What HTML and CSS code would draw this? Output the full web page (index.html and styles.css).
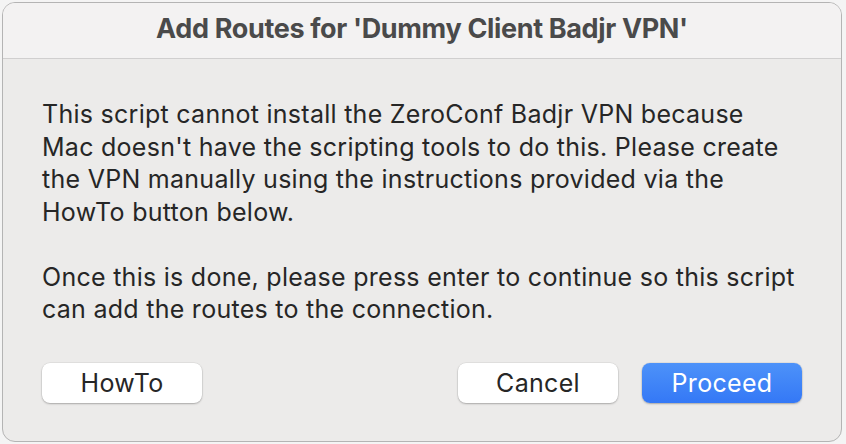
FILE: index.html
```html
<!DOCTYPE html>
<html lang="en">

<head>
  <meta charset="UTF-8">
  <meta name="viewport" content="width=device-width, initial-scale=1.0">
  <title>Add Routes</title>
  <link rel="stylesheet" href="styles.css">
</head>

<body>
  <div class="dialog">
    <div class="titlebar">Add Routes for 'Dummy Client Badjr VPN'</div>
    <div class="content">
      <p>This script cannot install the ZeroConf Badjr VPN because<br>
        Mac doesn't have the scripting tools to do this. Please create<br>
        the VPN manually using the instructions provided via the<br>
        HowTo button below.</p>
      <p>Once this is done, please press enter to continue so this script<br>
        can add the routes to the connection.</p>
      <div class="buttons">
        <button class="btn">HowTo</button>
        <div class="right">
          <button class="btn">Cancel</button>
          <button class="btn primary">Proceed</button>
        </div>
      </div>
    </div>
  </div>
</body>

</html>
```

FILE: styles.css
```css
body {
  margin: 0;
  background-color: #f4f4f4;
  font-family: Inter, "Noto Sans", sans-serif;
  width: 846px;
  height: 444px;
  overflow: hidden;
}

.dialog {
  box-sizing: border-box;
  margin: 2px 0 0 2px;
  width: 840px;
  height: 440px;
  border: 1px solid #b4b4b4;
  border-radius: 13px;
  background-color: #ecebea;
  overflow: hidden;
  display: flex;
  flex-direction: column;
}

.titlebar {
  flex-shrink: 0;
  box-sizing: border-box;
  height: 56px;
  padding-top: 12px;
  background-color: #f3f2f2;
  border-bottom: 1px solid #d0cfcf;
  color: #4a4a4a;
  font-weight: 700;
  font-size: 27px;
  line-height: 27px;
  letter-spacing: -0.35px;
  text-align: center;
  white-space: nowrap;
}

.content {
  padding: 39px 39px 0 39px;
  color: #262626;
  font-size: 25px;
  line-height: 32.5px;
  letter-spacing: 0.27px;
  white-space: nowrap;
}

.content p {
  margin: 0 0 32.5px 0;
}

.content p:last-of-type {
  margin-bottom: 0;
}

.buttons {
  display: flex;
  justify-content: space-between;
  margin-top: 37px;
}

.right {
  display: flex;
  gap: 24px;
}

.btn {
  width: 160px;
  height: 40px;
  border: none;
  border-radius: 8px;
  background-color: #fff;
  box-shadow: 0 1px 2px rgba(0, 0, 0, 0.25), 0 0 0 0.5px rgba(0, 0, 0, 0.08);
  font-family: Inter, "Noto Sans", sans-serif;
  font-size: 25px;
  letter-spacing: 0.3px;
  color: #262626;
  padding: 0;
}

.primary {
  background: linear-gradient(#4d92f9, #3478f6);
  color: #fff;
}
```
